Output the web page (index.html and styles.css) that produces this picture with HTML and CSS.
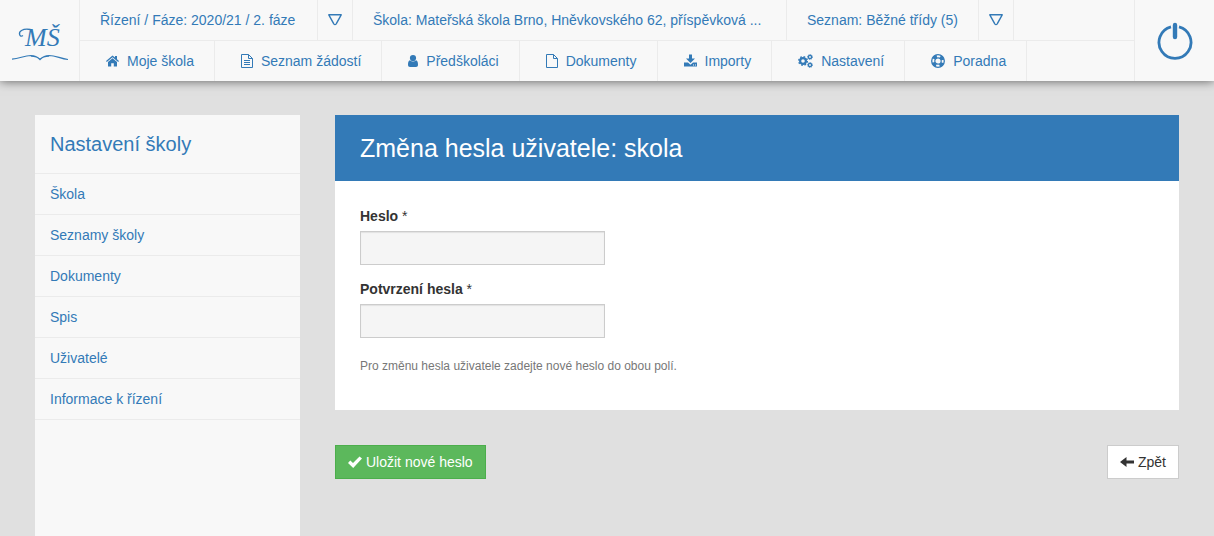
FILE: index.html
```html
<!DOCTYPE html>
<html lang="cs">
<head>
<meta charset="utf-8">
<title>Změna hesla uživatele</title>
<link rel="stylesheet" href="styles.css">
</head>
<body>
<header class="topbar">
  <a class="logo" href="#">
    <svg class="logo-mark" viewBox="0 0 56 40">
      <text class="logo-text" x="13" y="25">MŠ</text>
      <g fill="none" stroke="currentColor">
        <path d="M11 14.500C7.500 17 6 11.500 9.500 9.500c3-1.800 6-1.600 9-1" stroke-width="1.300"/>
        <path d="M0 38.200C8 37.500 12 34.500 19 34.500c4 0 7 2 9 4 2-2 5-4 9-4 7 0 11 3 19 4M19 35.200c4 0 7 1 9 3.300 2-2.300 5-3.300 9-3.300" stroke-width="1.200"/>
      </g>
    </svg>
  </a>
  <div class="menus">
    <nav class="menu context">
      <a class="item phase" href="#">Řízení / Fáze: 2020/21 / 2. fáze</a>
      <button class="drop" aria-label="Vybrat řízení"><svg viewBox="0 0 14 12"><path d="M.8.800h12.400L8.200 9.800Q7 11.500 5.800 9.800z" fill="none" stroke="currentColor" stroke-width="1.400" stroke-linejoin="round"/></svg></button>
      <a class="item school" href="#">Škola: Mateřská škola Brno, Hněvkovského 62, příspěvková ...</a>
      <a class="item" href="#">Seznam: Běžné třídy (5)</a>
      <button class="drop" aria-label="Vybrat seznam"><svg viewBox="0 0 14 12"><path d="M.8.800h12.400L8.200 9.800Q7 11.500 5.800 9.800z" fill="none" stroke="currentColor" stroke-width="1.400" stroke-linejoin="round"/></svg></button>
    </nav>
    <nav class="menu sections">
      <a class="item" href="#"><svg class="w13" viewBox="0 0 13 14"><path d="M6.500 4.200l4.500 3.700V12.500H7.800V9.200H5.200v3.300H2V7.900zM6.500 1.500L9 3.600V2h2v3.300L13 7l-.8.900-5.700-4.700L.8 7.900 0 7z" fill="currentColor"/></svg>Moje škola</a>
      <a class="item" href="#"><svg class="w12" viewBox="0 0 12 14"><path d="M.5.500h7l4 4v9H.5zM7.500.5v4h4M3 6.500h6M3 8.500h6M3 10.500h6" fill="none" stroke="currentColor"/></svg>Seznam žádostí</a>
      <a class="item" href="#"><svg class="w10" viewBox="0 0 10 14"><circle cx="5" cy="4" r="3.100" fill="currentColor"/><path d="M2 6.300C.5 6.600 0 8.500 0 10.800 0 12.200.8 13 2 13h6c1.200 0 2-.8 2-2.200 0-2.300-.5-4.200-2-4.500-1.700 1.600-4.300 1.600-6 0z" fill="currentColor"/></svg>Předškoláci</a>
      <a class="item" href="#"><svg class="w12" viewBox="0 0 12 14"><path d="M.5.500h7l4 4v9H.5zM7.500.5v4h4" fill="none" stroke="currentColor"/></svg>Dokumenty</a>
      <a class="item" href="#"><svg class="w13" viewBox="0 0 13 14"><path d="M5 .5h3V4.500h3L6.500 9 2 4.500h3zM0 8.500h4L6.500 10.800 9 8.500h4v4H0zM9 10.500v1h1v-1zm2 0v1h1v-1z" fill="currentColor" fill-rule="evenodd"/></svg>Importy</a>
      <a class="item" href="#"><svg class="w15" viewBox="0 0 15 14"><g fill="none" stroke="currentColor"><circle cx="5" cy="7" r="2.900" stroke-width="2.200"/><circle cx="5" cy="7" r="4.300" stroke-width="1.400" stroke-dasharray="1.690 1.690"/><circle cx="12" cy="3" r="1.600" stroke-width="1.400"/><circle cx="12" cy="3" r="2.500" stroke-width=".8" stroke-dasharray="1.100 .86"/><circle cx="12" cy="11" r="1.600" stroke-width="1.400"/><circle cx="12" cy="11" r="2.500" stroke-width=".8" stroke-dasharray="1.100 .86"/></g></svg>Nastavení</a>
      <a class="item" href="#"><svg class="w14" viewBox="0 0 14 14"><g fill="none" stroke="currentColor"><circle cx="7" cy="7" r="6.300" stroke-width="1.300"/><circle cx="7" cy="7" r="3.200" stroke-width="1.200"/><circle cx="7" cy="7" r="4.800" stroke-width="3.200" stroke-dasharray="4 3.540" stroke-dashoffset="-1.770"/></g></svg>Poradna</a>
    </nav>
  </div>
  <a class="power" href="#" aria-label="Odhlásit"><svg viewBox="0 0 36 38"><path d="M22 4.900a16 16 0 1 1-8 0" fill="none" stroke="currentColor" stroke-width="2.800"/><path d="M18 3v12" stroke="currentColor" stroke-width="4.400" stroke-linecap="round"/></svg></a>
</header>
<div class="page">
  <aside class="sidebar">
    <h2 class="side-title">Nastavení školy</h2>
    <a class="side-link" href="#">Škola</a>
    <a class="side-link" href="#">Seznamy školy</a>
    <a class="side-link" href="#">Dokumenty</a>
    <a class="side-link" href="#">Spis</a>
    <a class="side-link" href="#">Uživatelé</a>
    <a class="side-link" href="#">Informace k řízení</a>
  </aside>
  <main class="content">
    <form>
      <section class="panel">
        <h1 class="panel-title">Změna hesla uživatele: skola</h1>
        <div class="panel-body">
          <label class="label" for="heslo">Heslo <span class="star">*</span></label>
          <input class="field" id="heslo" type="password">
          <label class="label" for="potvrzeni">Potvrzení hesla <span class="star">*</span></label>
          <input class="field" id="potvrzeni" type="password">
          <p class="help">Pro změnu hesla uživatele zadejte nové heslo do obou polí.</p>
        </div>
      </section>
      <div class="actions">
        <button class="btn save" type="submit"><svg viewBox="0 0 14 14"><path d="M0 8l2.300-2.500L5 8l6.500-6.500L14 3.500 5.200 13z" fill="currentColor"/></svg>Uložit nové heslo</button>
        <button class="btn back" type="button"><svg viewBox="0 0 14 14"><path d="M0 7l6.500-5v3.500H14v3H6.500V12z" fill="currentColor"/></svg>Zpět</button>
      </div>
    </form>
  </main>
</div>
</body>
</html>
```
FILE: styles.css
```css
* {
  box-sizing: border-box;
}

body {
  margin: 0;
  min-height: 100vh;
  display: flex;
  flex-direction: column;
  background: #e0e0e0;
  color: #333;
  font: 14px/20px "Liberation Sans", Arial, sans-serif;
}

a {
  color: #337ab7;
  text-decoration: none;
}

.topbar {
  display: flex;
  background: #f8f8f8;
  box-shadow: 0 0 10px rgba(0, 0, 0, 0.6);
}

.logo {
  width: 80px;
  display: flex;
  align-items: center;
  justify-content: center;
  border-right: 1px solid #ebebeb;
}

.logo-mark {
  width: 56px;
  height: 40px;
}

.logo-text {
  fill: currentColor;
  font: italic 26px "Liberation Serif", serif;
}

.menus {
  flex: 1;
}

.menu {
  display: flex;
  height: 40px;
}

.context {
  height: 41px;
  border-bottom: 1px solid #ebebeb;
}

.item,
.drop {
  display: flex;
  align-items: center;
  gap: 8px;
  padding: 0 20px;
  border: 0;
  border-right: 1px solid #ebebeb;
  white-space: nowrap;
}

.phase {
  min-width: 238px;
}

.school {
  min-width: 434px;
}

.drop {
  width: 35px;
  padding: 0 10px;
  background: none;
  color: #337ab7;
}

.drop svg {
  width: 14px;
  height: 12px;
}

.sections .item {
  padding-left: 26px;
}

.sections svg {
  height: 14px;
}

.w10 {
  width: 10px;
}

.w12 {
  width: 12px;
}

.w13 {
  width: 13px;
}

.w14 {
  width: 14px;
}

.w15 {
  width: 15px;
}

.power {
  width: 80px;
  display: flex;
  align-items: center;
  justify-content: center;
  border-left: 1px solid #ebebeb;
}

.power svg {
  width: 36px;
  height: 38px;
}

.page {
  flex: 1;
  display: flex;
  gap: 35px;
  padding: 34px 35px 0;
}

.sidebar {
  width: 265px;
  background: #f8f8f8;
}

.side-title {
  margin: 0;
  padding: 14px 15px;
  border-bottom: 1px solid #ebebeb;
  color: #337ab7;
  font-size: 20px;
  font-weight: 400;
  line-height: 30px;
}

.side-link {
  display: block;
  padding: 10px 15px;
  border-bottom: 1px solid #ebebeb;
}

.content {
  flex: 1;
}

.panel {
  background: #fff;
}

.panel-title {
  margin: 0;
  padding: 18px 25px;
  background: #337ab7;
  color: #fff;
  font-size: 25px;
  font-weight: 400;
  line-height: 30px;
}

.panel-body {
  padding: 25px 25px 34px;
}

.label {
  display: block;
  margin-bottom: 5px;
  font-weight: 700;
}

.star {
  font-weight: 400;
}

.field {
  display: block;
  width: 245px;
  height: 34px;
  margin-bottom: 14px;
  padding: 6px 12px;
  border: 1px solid #ccc;
  background: #f5f5f5;
  box-shadow: inset 0 1px 1px rgba(0, 0, 0, 0.08);
  font: inherit;
}

.help {
  margin: 18px 0 0;
  color: #777;
  font-size: 12px;
}

.actions {
  display: flex;
  justify-content: space-between;
  margin-top: 35px;
}

.btn {
  display: flex;
  align-items: center;
  gap: 4px;
  padding: 6px 12px;
  border: 1px solid #ccc;
  background: #fff;
  color: #333;
  font: inherit;
}

.btn svg {
  width: 14px;
  height: 14px;
}

.save {
  border-color: #4cae4c;
  background: #5cb85c;
  color: #fff;
}
```
